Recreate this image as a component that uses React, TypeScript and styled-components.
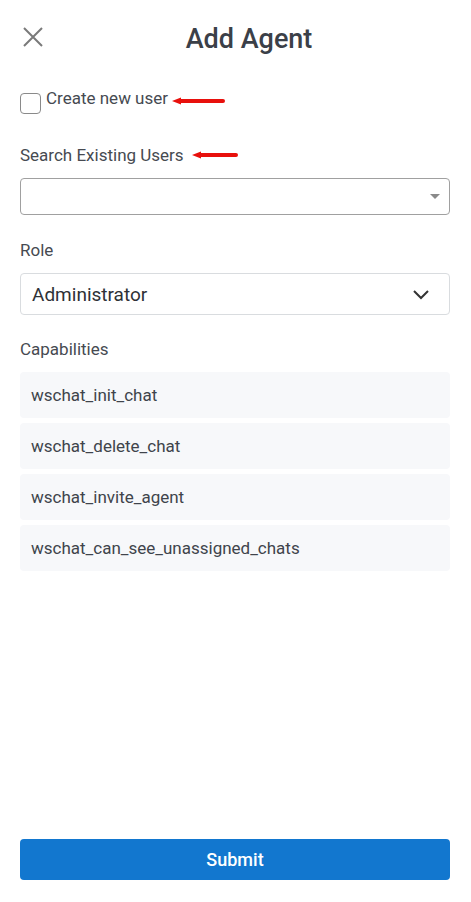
import styled, { createGlobalStyle } from 'styled-components';

const capabilities = [
  'wschat_init_chat',
  'wschat_delete_chat',
  'wschat_invite_agent',
  'wschat_can_see_unassigned_chats',
];

const Arrow: React.FC<{ width: number }> = ({ width }) => (
  <svg width={width} height="10" viewBox={`0 0 ${width} 10`}>
    <path d={`M8 5 H${width - 3}`} stroke="#e8100c" strokeWidth="4" strokeLinecap="round" />
    <path d="M1 5 L10 1.5 L10 8.5 Z" fill="#e8100c" />
  </svg>
);

export default function App() {
  return (
    <>
      <GlobalStyle />
      <Page>
        <Header>
          <CloseButton aria-label="Close">
            <svg width="20" height="20" viewBox="0 0 20 20">
              <path d="M1 1 L19 19 M19 1 L1 19" stroke="#7a7a7a" strokeWidth="2" />
            </svg>
          </CloseButton>
          <Title>Add Agent</Title>
        </Header>

        <CheckRow>
          <CheckBox type="checkbox" />
          <CheckLabel>Create new user</CheckLabel>
          <Arrow width={55} />
        </CheckRow>

        <FieldLabel $top={30}>
          Search Existing Users
          <Arrow width={48} />
        </FieldLabel>
        <SearchSelect>
          <Caret />
        </SearchSelect>

        <FieldLabel $top={23}>Role</FieldLabel>
        <RoleSelect>
          <span>Administrator</span>
          <svg width="18" height="12" viewBox="0 0 18 12">
            <path d="M2 3 L9 10 L16 3" stroke="#333" strokeWidth="2" fill="none" />
          </svg>
        </RoleSelect>

        <FieldLabel $top={22}>Capabilities</FieldLabel>
        <CapList>
          {capabilities.map((c) => (
            <CapItem key={c}>{c}</CapItem>
          ))}
        </CapList>

        <Spacer />
        <SubmitButton>Submit</SubmitButton>
      </Page>
    </>
  );
}

const GlobalStyle = createGlobalStyle`
  body {
    margin: 0;
    background: #ffffff;
    font-family: Roboto, "Liberation Sans", sans-serif;
    color: #464a51;
  }
`;

const Page = styled.div`
  display: flex;
  flex-direction: column;
  height: 902px;
  box-sizing: border-box;
  padding: 20px 21px 22px 20px;
`;

const Header = styled.div`
  display: flex;
  align-items: center;
  height: 38px;
`;

const CloseButton = styled.button`
  width: 28px;
  padding: 0 0 0 3px;
  border: none;
  background: none;
  display: flex;
  align-items: center;
  margin-top: -5px;
`;

const Title = styled.h1`
  flex: 1;
  margin: 0;
  text-align: center;
  font-size: 27px;
  font-weight: 500;
  color: #3b4048;
`;

const CheckRow = styled.div`
  display: flex;
  align-items: center;
  margin-top: 31px;
  height: 24px;
`;

const CheckBox = styled.input`
  appearance: none;
  margin: 5px 5px 0 0;
  width: 21px;
  height: 21px;
  border: 1px solid #8a8a8a;
  border-radius: 4px;
  box-sizing: border-box;
`;

const CheckLabel = styled.span`
  font-size: 17px;
  margin-right: 3px;
  margin-top: -6px;
`;

const FieldLabel = styled.div<{ $top: number }>`
  display: flex;
  align-items: center;
  gap: 7px;
  font-size: 17px;
  margin-top: ${(p) => p.$top}px;
  height: 24px;
  margin-bottom: 11px;
`;

const SearchSelect = styled.div`
  position: relative;
  height: 37px;
  border: 1px solid #a0a0a0;
  border-radius: 4px;
  box-sizing: border-box;
`;

const Caret = styled.span`
  position: absolute;
  right: 9px;
  top: 15px;
  width: 0;
  height: 0;
  border-left: 5px solid transparent;
  border-right: 5px solid transparent;
  border-top: 5px solid #8a8a8a;
`;

const RoleSelect = styled.div`
  display: flex;
  align-items: center;
  justify-content: space-between;
  height: 42px;
  padding: 0 19px 0 11px;
  border: 1px solid #d9dcdf;
  border-radius: 4px;
  box-sizing: border-box;
  font-size: 19px;
  color: #2e3136;
`;

const CapList = styled.div`
  display: flex;
  flex-direction: column;
  gap: 5px;
`;

const CapItem = styled.div`
  display: flex;
  align-items: center;
  height: 46px;
  padding: 0 11px;
  background: #f7f8fa;
  border-radius: 4px;
  font-size: 17px;
  color: #40444b;
`;

const Spacer = styled.div`
  flex: 1;
`;

const SubmitButton = styled.button`
  height: 41px;
  border: none;
  border-radius: 4px;
  background: #1277cf;
  color: #ffffff;
  font-family: Roboto, "Liberation Sans", sans-serif;
  font-size: 18px;
  font-weight: 500;
`;
